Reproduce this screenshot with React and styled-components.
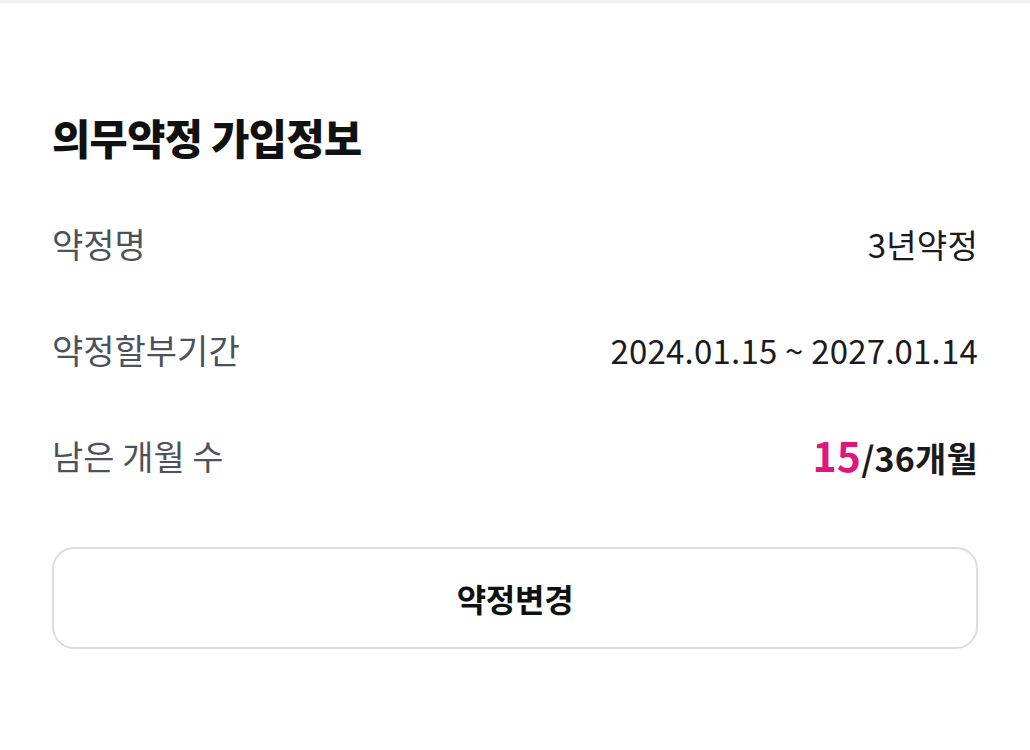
import React from "react";
import styled, { createGlobalStyle } from "styled-components";

const GlobalStyle = createGlobalStyle`
  html, body {
    margin: 0;
    padding: 0;
    background: #ffffff;
  }
  body {
    font-family: "Noto Sans CJK KR", "Noto Sans", sans-serif;
    -webkit-font-smoothing: antialiased;
  }
`;

const TopLine = styled.div`
  height: 3px;
  background: #eef0f3;
`;

const Section = styled.section`
  padding: 110px 52px 0;
`;

const Title = styled.h2`
  margin: 0 0 30px;
  font-size: 41.5px;
  line-height: 48px;
  font-weight: 800;
  color: #111111;
  letter-spacing: -0.6px;
`;

const InfoList = styled.dl`
  margin: 0;
`;

const Row = styled.div`
  display: flex;
  justify-content: space-between;
  align-items: center;
  height: 106px;
`;

const Label = styled.dt`
  font-size: 34px;
  line-height: 40px;
  color: #4d525a;
`;

const Value = styled.dd`
  margin: 0;
  font-size: ${(p) => (p.$bold ? "34px" : "33px")};
  line-height: 40px;
  color: #1b1b1d;
  letter-spacing: 0.2px;
  font-weight: ${(p) => (p.$bold ? 700 : 400)};
`;

const Highlight = styled.span`
  color: #e0177b;
  font-size: 41px;
`;

const ChangeButton = styled.button`
  display: flex;
  align-items: center;
  justify-content: center;
  width: 100%;
  height: 102px;
  margin-top: 38px;
  border: 2px solid #dcdcdc;
  border-radius: 22px;
  background: #ffffff;
  font-family: inherit;
  font-size: 32px;
  font-weight: 700;
  color: #111111;
  letter-spacing: -0.3px;
  cursor: pointer;
`;

const rows = [
  { label: "약정명", value: "3년약정" },
  { label: "약정할부기간", value: "2024.01.15 ~ 2027.01.14" },
];

export default function App() {
  return (
    <>
      <GlobalStyle />
      <TopLine />
      <Section>
        <Title>의무약정 가입정보</Title>
        <InfoList>
          {rows.map((r) => (
            <Row key={r.label}>
              <Label>{r.label}</Label>
              <Value>{r.value}</Value>
            </Row>
          ))}
          <Row>
            <Label>남은 개월 수</Label>
            <Value $bold>
              <Highlight>15</Highlight>/36개월
            </Value>
          </Row>
        </InfoList>
        <ChangeButton>약정변경</ChangeButton>
      </Section>
    </>
  );
}
